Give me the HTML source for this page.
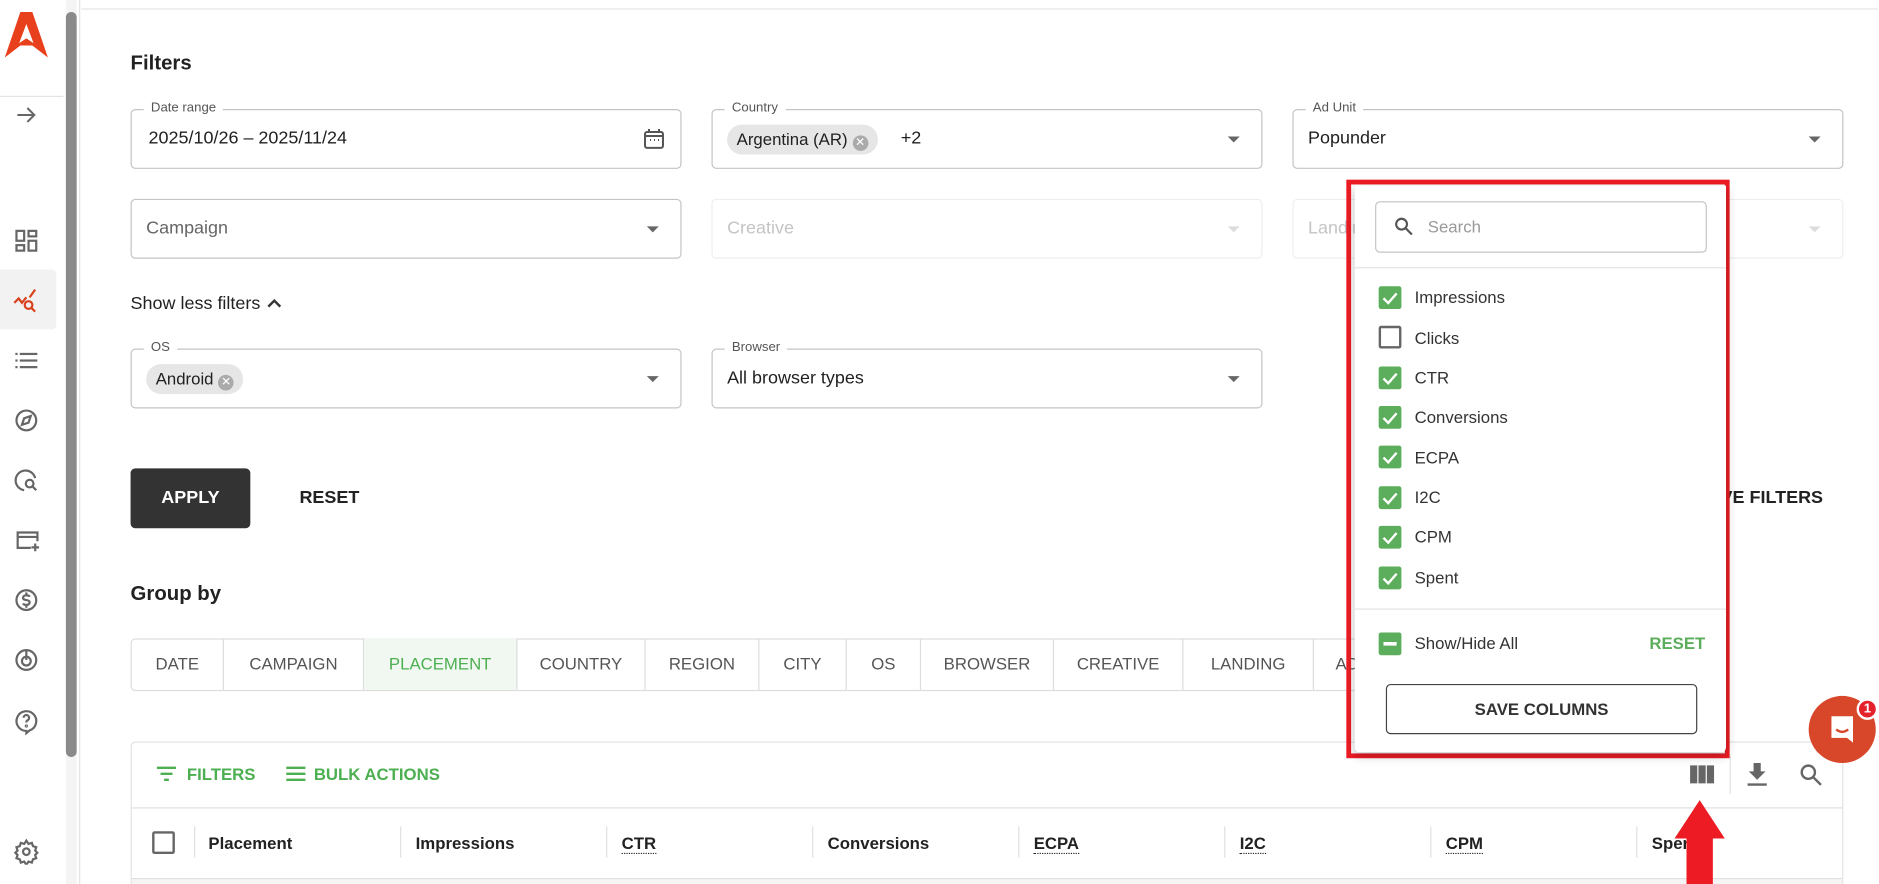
<!DOCTYPE html>
<html><head><meta charset="utf-8">
<style>
*{box-sizing:border-box;margin:0;padding:0}
html,body{width:1879px;height:884px;overflow:hidden;background:#fff}
#w{position:absolute;left:0;top:0;width:1568px;height:738px;overflow:hidden;transform:scale(1.1978);transform-origin:0 0;font-family:"Liberation Sans",Arial,sans-serif;color:#212121}
.a{position:absolute}
.fld{position:absolute;border:1px solid #c4c4c4;border-radius:4px;height:50px;width:460px}
.lbl{position:absolute;top:-8px;left:10px;background:#fff;padding:0 6px;font-size:11px;color:#555}
.val{position:absolute;left:14px;top:15px;font-size:15px}
.dd{position:absolute;right:18px;top:22px;width:0;height:0;border-left:5px solid transparent;border-right:5px solid transparent;border-top:5px solid #666}
.chip{position:absolute;left:12px;top:12px;height:25px;border-radius:13px;background:#e6e6e6;font-size:14px;padding:4px 8px;white-space:nowrap}
.x{display:inline-block;width:13px;height:13px;border-radius:50%;background:#aaa;color:#fff;font-size:10px;text-align:center;line-height:13px;margin-left:4px;vertical-align:-1px}
.ic{position:absolute;left:11px}
.tab{position:absolute;top:533px;height:43px;border-right:1px solid #ddd;font-size:14px;color:#555;text-align:center;line-height:43px;white-space:nowrap;overflow:hidden}
.th{position:absolute;top:696px;font-size:14px;font-weight:bold;color:#222}
.sep{position:absolute;top:690px;width:1px;height:26px;background:#e0e0e0}
.u{border-bottom:1px dotted #222}
.cb{position:absolute;left:1151px;width:19px;height:19px;border-radius:2px;background:#5cad5c}
.cb svg{position:absolute;left:2px;top:2px}
.it{position:absolute;left:1181px;font-size:14px;color:#333}
</style></head><body><div id="w">
<div class="a" style="left:0;top:0;width:67px;height:738px;background:#fff;border-right:1px solid #e4e4e4"></div>
<div class="a" style="left:55px;top:0;width:9px;height:738px;background:#f4f4f4"></div>
<div class="a" style="left:55px;top:10px;width:9px;height:622px;border-radius:5px;background:#8a8a8a"></div>
<svg class="a" style="left:4px;top:10px" width="36" height="40" viewBox="0 0 36 40"><path d="M13 0h10l13 38-13-10-10 0-13 10z" fill="#e8401c"/><path d="M18 10l-6 16 6-4 6 4z" fill="#fff"/></svg>
<div class="a" style="left:0;top:80px;width:53px;height:1px;background:#e4e4e4"></div>
<svg class="a" style="left:12px;top:86px" width="20" height="20" viewBox="0 0 24 24"><path d="M3 12h17M13 5l7 7-7 7" stroke="#666" stroke-width="2" fill="none"/></svg>
<div class="a" style="left:0;top:225px;width:47px;height:50px;background:#f2f2f2;border-radius:0 4px 4px 0"></div>
<svg class="ic" style="top:190px" width="22" height="22" viewBox="0 0 24 24" fill="none" stroke="#666" stroke-width="2"><rect x="3" y="3" width="7" height="9"/><rect x="14" y="3" width="7" height="5"/><rect x="3" y="16" width="7" height="5"/><rect x="14" y="12" width="7" height="9"/></svg>
<svg class="ic" style="top:240px" width="22" height="22" viewBox="0 0 24 24" fill="none" stroke="#d9401c" stroke-width="2"><path d="M1 14l4-4 3 4 4-5"/><path d="M15 9l5-7"/><circle cx="14" cy="16" r="3.5"/><path d="M17 19l3 3"/></svg>
<svg class="ic" style="top:290px" width="22" height="22" viewBox="0 0 24 24" fill="#666"><rect x="2" y="5" width="2" height="2"/><rect x="6" y="5" width="16" height="2"/><rect x="2" y="11" width="2" height="2"/><rect x="6" y="11" width="16" height="2"/><rect x="2" y="17" width="2" height="2"/><rect x="6" y="17" width="16" height="2"/></svg>
<svg class="ic" style="top:340px" width="22" height="22" viewBox="0 0 24 24" fill="none" stroke="#666" stroke-width="2"><circle cx="12" cy="12" r="9"/><path d="M16 8l-2 6-6 2 2-6z"/></svg>
<svg class="ic" style="top:390px" width="22" height="22" viewBox="0 0 24 24" fill="none" stroke="#666" stroke-width="2"><path d="M20 10A9 9 0 1 0 10 21"/><circle cx="15" cy="15" r="3.5"/><path d="M18 18l3 3"/></svg>
<svg class="ic" style="top:440px" width="24" height="22" viewBox="0 0 24 24" fill="none" stroke="#666" stroke-width="2"><path d="M15 19H3V5h18v8"/><path d="M3 9h18"/><path d="M19 15v7M15.5 18.5h7"/></svg>
<svg class="ic" style="top:490px" width="22" height="22" viewBox="0 0 24 24" fill="none" stroke="#666" stroke-width="2"><circle cx="12" cy="12" r="9"/><path d="M15 9c-1-2-6-2-6 1s6 1 6 4-5 3-6 1M12 5v2M12 17v2"/></svg>
<svg class="ic" style="top:540px" width="22" height="22" viewBox="0 0 24 24" fill="none" stroke="#666" stroke-width="2"><circle cx="12" cy="12" r="9"/><path d="M12 3v9"/><circle cx="12" cy="13" r="4"/></svg>
<svg class="ic" style="top:590px" width="22" height="24" viewBox="0 0 24 24" fill="none" stroke="#666" stroke-width="2"><path d="M12 21a9 9 0 1 1 3-.5L12 23z"/><path d="M9.5 9a2.5 2.5 0 1 1 3.5 2.3c-1 .5-1 1-1 2"/><circle cx="12" cy="16.5" r=".5"/></svg>
<svg class="ic" style="top:700px" width="22" height="22" viewBox="0 0 24 24" fill="none" stroke="#666" stroke-width="2"><circle cx="12" cy="12" r="3"/><path d="M12 2l2 3 3-1 1 3 3 1-1 3 2 2-2 2 1 3-3 1-1 3-3-1-2 3-2-3-3 1-1-3-3-1 1-3-2-2 2-2-1-3 3-1 1-3 3 1z"/></svg>
<div class="a" style="left:68px;top:7px;width:1500px;height:1px;background:#e4e4e4"></div>
<div class="a" style="left:109px;top:43px;font-size:17px;font-weight:bold;color:#222">Filters</div>
<div class="fld" style="left:109px;top:91px"><span class="lbl">Date range</span><span class="val">2025/10/26 – 2025/11/24</span>
<svg class="a" style="right:12px;top:14px" width="20" height="20" viewBox="0 0 24 24" fill="none" stroke="#555" stroke-width="2"><rect x="3" y="5" width="18" height="16" rx="2"/><path d="M3 9h18M7 2v4M17 2v4"/><path d="M8 13h1M12 13h1M16 13h1"/></svg></div>
<div class="fld" style="left:594px;top:91px"><span class="lbl">Country</span><span class="chip">Argentina (AR)<span class="x">✕</span></span><span class="val" style="left:157px">+2</span><span class="dd"></span></div>
<div class="fld" style="left:1079px;top:91px"><span class="lbl">Ad Unit</span><span class="val" style="left:12px">Popunder</span><span class="dd"></span></div>
<div class="fld" style="left:109px;top:166px"><span class="val" style="left:12px;color:#666">Campaign</span><span class="dd"></span></div>
<div class="fld" style="left:594px;top:166px;border-color:#eee"><span class="val" style="left:12px;color:#c4c4c4">Creative</span><span class="dd" style="border-top-color:#ddd"></span></div>
<div class="fld" style="left:1079px;top:166px;border-color:#eee"><span class="val" style="left:12px;color:#c4c4c4">Landing</span><span class="dd" style="border-top-color:#ddd"></span></div>
<div class="a" style="left:109px;top:245px;font-size:15px">Show less filters <svg width="14" height="10" viewBox="0 0 14 10"><path d="M2 8l5-5 5 5" stroke="#333" stroke-width="2" fill="none"/></svg></div>
<div class="fld" style="left:109px;top:291px"><span class="lbl">OS</span><span class="chip">Android<span class="x">✕</span></span><span class="dd"></span></div>
<div class="fld" style="left:594px;top:291px"><span class="lbl">Browser</span><span class="val" style="left:12px">All browser types</span><span class="dd"></span></div>
<div class="a" style="left:109px;top:391px;width:100px;height:50px;background:#333;border-radius:4px;color:#fff;font-weight:bold;font-size:15px;text-align:center;line-height:50px">APPLY</div>
<div class="a" style="left:250px;top:407px;font-weight:bold;font-size:15px;color:#222">RESET</div>
<div class="a" style="left:1380px;top:407px;font-weight:bold;font-size:15px;color:#222;width:142px;text-align:right">SAVE FILTERS</div>
<div class="a" style="left:109px;top:486px;font-size:17px;font-weight:bold;color:#222">Group by</div>
<div class="a" style="left:109px;top:533px;width:1040px;height:44px;border:1px solid #ddd;border-radius:4px"></div>
<div class="tab" style="left:110px;width:77px">DATE</div>
<div class="tab" style="left:187px;width:117px">CAMPAIGN</div>
<div class="tab" style="left:304px;width:128px;background:#f1f8f1;color:#4caf50">PLACEMENT</div>
<div class="tab" style="left:432px;width:107px">COUNTRY</div>
<div class="tab" style="left:539px;width:95px">REGION</div>
<div class="tab" style="left:634px;width:73px">CITY</div>
<div class="tab" style="left:707px;width:62px">OS</div>
<div class="tab" style="left:769px;width:111px">BROWSER</div>
<div class="tab" style="left:880px;width:108px">CREATIVE</div>
<div class="tab" style="left:988px;width:109px">LANDING</div>
<div class="tab" style="left:1097px;width:50px;border:0;text-align:left;padding-left:18px">AD UNIT</div>
<div class="a" style="left:109px;top:619px;width:1430px;height:119px;border:1px solid #e0e0e0;border-bottom:0;border-radius:4px 4px 0 0"></div>
<div class="a" style="left:110px;top:674px;width:1428px;height:1px;background:#e0e0e0"></div>
<div class="a" style="left:110px;top:733px;width:1428px;height:5px;background:#f5f5f5;border-top:1px solid #e0e0e0"></div>
<svg class="a" style="left:130px;top:638px" width="18" height="16" viewBox="0 0 18 16"><path d="M1 3h16M4 8h10M7 13h4" stroke="#4caf50" stroke-width="2"/></svg>
<div class="a" style="left:156px;top:638px;font-size:14px;color:#4caf50;font-weight:bold">FILTERS</div>
<svg class="a" style="left:238px;top:638px" width="18" height="16" viewBox="0 0 18 16"><path d="M1 3h16M1 8h16M1 13h16" stroke="#4caf50" stroke-width="2"/></svg>
<div class="a" style="left:262px;top:638px;font-size:14px;color:#4caf50;font-weight:bold">BULK ACTIONS</div>
<svg class="a" style="left:1410px;top:638px" width="22" height="17" viewBox="0 0 22 17"><rect x="1" y="1" width="6" height="15" fill="#666"/><rect x="8" y="1" width="6" height="15" fill="#666"/><rect x="15" y="1" width="6" height="15" fill="#666"/></svg>
<div class="a" style="left:1444px;top:630px;width:1px;height:33px;background:#e0e0e0"></div>
<svg class="a" style="left:1457px;top:636px" width="20" height="22" viewBox="0 0 20 22"><path d="M7 1h6v7h4l-7 7-7-7h4z" fill="#666"/><rect x="2" y="18" width="16" height="2" fill="#666"/></svg>
<svg class="a" style="left:1501px;top:636px" width="22" height="22" viewBox="0 0 24 24" fill="none" stroke="#666" stroke-width="2.2"><circle cx="9.5" cy="9.5" r="6"/><path d="M14 14l7 7"/></svg>
<div class="a" style="left:127px;top:694px;width:19px;height:19px;border:2px solid #666;border-radius:2px"></div>
<div class="sep" style="left:162px"></div><div class="th" style="left:174px">Placement</div>
<div class="sep" style="left:334px"></div><div class="th" style="left:347px">Impressions</div>
<div class="sep" style="left:506px"></div><div class="th" style="left:519px"><span class="u">CTR</span></div>
<div class="sep" style="left:678px"></div><div class="th" style="left:691px">Conversions</div>
<div class="sep" style="left:850px"></div><div class="th" style="left:863px"><span class="u">ECPA</span></div>
<div class="sep" style="left:1022px"></div><div class="th" style="left:1035px"><span class="u">I2C</span></div>
<div class="sep" style="left:1194px"></div><div class="th" style="left:1207px"><span class="u">CPM</span></div>
<div class="sep" style="left:1366px"></div><div class="th" style="left:1379px">Spent</div>
<div class="a" style="left:1124px;top:150px;width:320px;height:483px;border:4px solid #ed1c24"></div>
<div class="a" style="left:1131px;top:155px;width:310px;height:473px;background:#fff;box-shadow:0 3px 8px rgba(0,0,0,.25);border-radius:0 0 4px 4px"></div>
<div class="a" style="left:1148px;top:168px;width:277px;height:43px;border:1px solid #c4c4c4;border-radius:4px"></div>
<svg class="a" style="left:1163px;top:180px" width="18" height="18" viewBox="0 0 24 24" fill="none" stroke="#555" stroke-width="2.4"><circle cx="9.5" cy="9.5" r="6"/><path d="M14 14l7 7"/></svg>
<div class="a" style="left:1192px;top:181px;font-size:14px;color:#999">Search</div>
<div class="a" style="left:1131px;top:223px;width:310px;height:1px;background:#e4e4e4"></div>
<div class="cb" style="top:239px"><svg width="15" height="15" viewBox="0 0 15 15"><path d="M2 8l4 4 7-8" stroke="#fff" stroke-width="2" fill="none"/></svg></div><div class="it" style="top:240px">Impressions</div>
<div class="cb" style="top:272px;background:#fff;border:2px solid #666"></div><div class="it" style="top:274px">Clicks</div>
<div class="cb" style="top:306px"><svg width="15" height="15" viewBox="0 0 15 15"><path d="M2 8l4 4 7-8" stroke="#fff" stroke-width="2" fill="none"/></svg></div><div class="it" style="top:307px">CTR</div>
<div class="cb" style="top:339px"><svg width="15" height="15" viewBox="0 0 15 15"><path d="M2 8l4 4 7-8" stroke="#fff" stroke-width="2" fill="none"/></svg></div><div class="it" style="top:340px">Conversions</div>
<div class="cb" style="top:372px"><svg width="15" height="15" viewBox="0 0 15 15"><path d="M2 8l4 4 7-8" stroke="#fff" stroke-width="2" fill="none"/></svg></div><div class="it" style="top:374px">ECPA</div>
<div class="cb" style="top:406px"><svg width="15" height="15" viewBox="0 0 15 15"><path d="M2 8l4 4 7-8" stroke="#fff" stroke-width="2" fill="none"/></svg></div><div class="it" style="top:407px">I2C</div>
<div class="cb" style="top:439px"><svg width="15" height="15" viewBox="0 0 15 15"><path d="M2 8l4 4 7-8" stroke="#fff" stroke-width="2" fill="none"/></svg></div><div class="it" style="top:440px">CPM</div>
<div class="cb" style="top:473px"><svg width="15" height="15" viewBox="0 0 15 15"><path d="M2 8l4 4 7-8" stroke="#fff" stroke-width="2" fill="none"/></svg></div><div class="it" style="top:474px">Spent</div>
<div class="a" style="left:1131px;top:508px;width:310px;height:1px;background:#e4e4e4"></div>
<div class="cb" style="top:528px"><div class="a" style="left:4px;top:8px;width:11px;height:3px;background:#fff"></div></div>
<div class="it" style="top:529px">Show/Hide All</div>
<div class="a" style="left:1377px;top:529px;font-size:14px;color:#5cad5c;font-weight:bold">RESET</div>
<div class="a" style="left:1157px;top:571px;width:260px;height:42px;border:1px solid #444;border-radius:4px;text-align:center;line-height:40px;font-size:14px;font-weight:bold;color:#333">SAVE COLUMNS</div>
<svg class="a" style="left:1396px;top:668px" width="46" height="70" viewBox="0 0 46 70"><path d="M23 0L44 32H34V70H12V32H2z" fill="#ed1c24"/></svg>
<div class="a" style="left:1510px;top:581px;width:56px;height:56px;border-radius:50%;background:#d9472b"></div>
<svg class="a" style="left:1526px;top:596px" width="24" height="26" viewBox="0 0 24 26"><path d="M3 2h18v22l-5-4H3z" fill="#fff"/><path d="M7 13q5 4 10 0" stroke="#d9472b" stroke-width="2" fill="none"/></svg>
<div class="a" style="left:1550px;top:583px;width:18px;height:18px;border-radius:50%;background:#e5222b;border:2px solid #fff;color:#fff;font-size:11px;font-weight:bold;text-align:center;line-height:14px">1</div>
</div></body></html>
